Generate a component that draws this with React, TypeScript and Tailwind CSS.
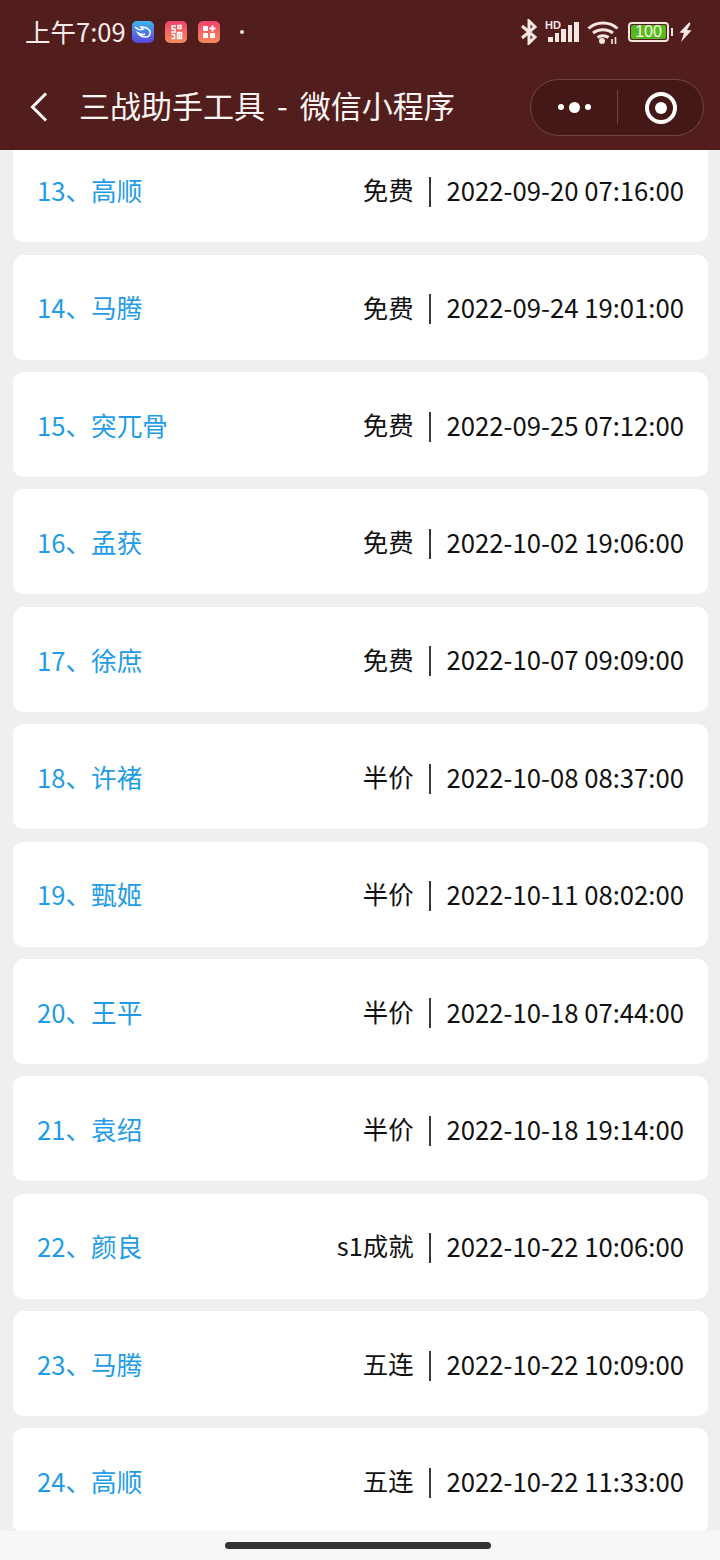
const rows = [
  { id: 13, name: '高顺', kind: '免费', time: '2022-09-20 07:16:00' },
  { id: 14, name: '马腾', kind: '免费', time: '2022-09-24 19:01:00' },
  { id: 15, name: '突兀骨', kind: '免费', time: '2022-09-25 07:12:00' },
  { id: 16, name: '孟获', kind: '免费', time: '2022-10-02 19:06:00' },
  { id: 17, name: '徐庶', kind: '免费', time: '2022-10-07 09:09:00' },
  { id: 18, name: '许褚', kind: '半价', time: '2022-10-08 08:37:00' },
  { id: 19, name: '甄姬', kind: '半价', time: '2022-10-11 08:02:00' },
  { id: 20, name: '王平', kind: '半价', time: '2022-10-18 07:44:00' },
  { id: 21, name: '袁绍', kind: '半价', time: '2022-10-18 19:14:00' },
  { id: 22, name: '颜良', kind: 's1成就', time: '2022-10-22 10:06:00' },
  { id: 23, name: '马腾', kind: '五连', time: '2022-10-22 10:09:00' },
  { id: 24, name: '高顺', kind: '五连', time: '2022-10-22 11:33:00' },
]

function AppIcons() {
  return (
    <div className="flex items-center gap-[11px]">
      <svg width="22" height="22" viewBox="0 0 22 22">
        <defs>
          <linearGradient id="cloud" x1="0" y1="0" x2="0" y2="1">
            <stop offset="0" stopColor="#3fb4ee" />
            <stop offset="1" stopColor="#5a45d8" />
          </linearGradient>
        </defs>
        <rect width="22" height="22" rx="5" fill="url(#cloud)" />
        <path d="M3 6c3 3 6 3 8 2l-2-2c4 0 7 1 9 4 1 3-1 6-4 6-3 0-6-1-8-4 2 1 5 2 7 1" fill="none" stroke="#fff" strokeWidth="1.500" />
      </svg>
      <svg width="22" height="22" viewBox="0 0 22 22">
        <defs>
          <linearGradient id="red" x1="0" y1="0" x2="0" y2="1">
            <stop offset="0" stopColor="#f2456a" />
            <stop offset="1" stopColor="#f58a5c" />
          </linearGradient>
        </defs>
        <rect width="22" height="22" rx="5" fill="url(#red)" />
        <path d="M11 5H7v3h3v3H6M13 4.500h3v3h-3zM6.500 13.500h3v4h-3M12.500 11.500h4v6h-4zM14.500 11.500v6" fill="none" stroke="#fff" strokeWidth="1.500" />
      </svg>
      <svg width="22" height="22" viewBox="0 0 22 22">
        <rect width="22" height="22" rx="5" fill="url(#red)" />
        <rect x="5" y="5" width="5" height="5" rx="1" fill="#fff" />
        <rect x="12" y="12" width="5" height="5" rx="1" fill="#fff" />
        <rect x="5" y="12" width="5" height="5" rx="1" fill="#fff" />
        <path d="M14.500 4.500v6M11.500 7.500h6" stroke="#fff" strokeWidth="1.800" />
      </svg>
      <span className="ml-[9px] h-[4px] w-[4px] rounded-full bg-[#f3e6e3]" />
    </div>
  )
}

function StatusIcons() {
  return (
    <div className="flex items-center text-[#f5e6e3]">
      <svg width="18" height="26" viewBox="0 0 18 26" fill="none" stroke="currentColor" strokeWidth="3">
        <path d="M2 7l13 11-6 6V2l6 6L2 19" />
      </svg>
      <div className="relative ml-[8px] h-[22px] w-[33px]">
        <span className="absolute left-[-1px] top-[-1px] text-[11px] font-bold leading-[10px] [font-family:'Liberation_Sans',sans-serif]">HD</span>
        <div className="absolute bottom-[1px] left-[2px] flex items-end gap-[2px]">
          <span className="h-[5px] w-[4.600px] bg-current" />
          <span className="h-[9px] w-[4.600px] bg-current" />
          <span className="h-[13px] w-[4.600px] bg-current" />
          <span className="h-[17px] w-[4.600px] bg-current" />
          <span className="h-[20px] w-[4.600px] bg-current" />
        </div>
      </div>
      <svg className="ml-[8px]" width="32" height="24" viewBox="0 0 32 24" fill="none" stroke="currentColor" strokeWidth="3">
        <path d="M1.500 8.500C9 1 23 1 30.500 8.500" />
        <path d="M6 13c5.500-4.500 14.500-4.500 20 0" />
        <path d="M10.500 17.500c3-2.500 8-2.500 11 0" />
        <circle cx="15" cy="21" r="1.500" fill="currentColor" />
        <path d="M25 19v5M28.500 17v7" strokeWidth="1.600" />
      </svg>
      <div className="ml-[9px] flex h-[20px] w-[41px] items-center justify-center rounded-[4px] border-2 border-current p-[1px]">
        <span className="flex h-full w-full items-center justify-center rounded-[2px] bg-[#58b81c] text-[16px] leading-none text-[#f4f9ea] [font-family:'Liberation_Sans',sans-serif]">100</span>
      </div>
      <span className="ml-[2px] h-[8px] w-[2px] bg-current" />
      <svg className="ml-[6px]" width="13" height="20" viewBox="0 0 13 20" fill="currentColor">
        <path d="M10.500 0L.500 10.500l4.500.5L2 20 12.500 8.500 8 8l3.500-6z" />
      </svg>
    </div>
  )
}

export default function App() {
  return (
    <div className="flex h-[1560px] w-[720px] flex-col overflow-hidden bg-[#efefef] [font-family:'Noto_Sans_CJK_SC',sans-serif]">
      <header className="relative z-10 flex h-[150px] shrink-0 flex-col bg-[#521e1d] text-white">
        <div className="flex h-[64px] items-center justify-between pl-[25px] pr-[28px]">
          <div className="flex items-center gap-[6px]">
            <span className="mt-[-2px] text-[25.500px] leading-none text-[#f8ece9]">上午7:09</span>
            <AppIcons />
          </div>
          <StatusIcons />
        </div>
        <div className="flex h-[86px] items-center pl-[30px] pr-[16px]">
          <svg width="18" height="30" viewBox="0 0 18 30" fill="none" stroke="currentColor" strokeWidth="3">
            <path d="M16 1.500L2.500 15 16 28.500" />
          </svg>
          <h1 className="mb-[5px] ml-[31px] flex-1 text-[31px] font-normal leading-none text-[#fdf6f4] [word-spacing:5px]">三战助手工具 - 微信小程序</h1>
          <div className="flex h-[57px] w-[174px] items-center rounded-full border border-[#6f4644] bg-[#441817]">
            <div className="flex w-[86px] items-center justify-center gap-[5px]">
              <span className="h-[6px] w-[6px] rounded-full bg-white" />
              <span className="h-[11px] w-[11px] rounded-full bg-white" />
              <span className="h-[6px] w-[6px] rounded-full bg-white" />
            </div>
            <span className="h-[34px] w-px bg-[#6f4644]" />
            <div className="flex flex-1 items-center justify-center pl-[1px] pt-[1px]">
              <div className="flex h-[32px] w-[32px] items-center justify-center rounded-full border-[4px] border-white">
                <span className="h-[12px] w-[12px] rounded-full bg-white" />
              </div>
            </div>
          </div>
        </div>
      </header>

      <main className="min-h-0 flex-1 overflow-hidden">
        <ul className="mt-[-12.6px] flex flex-col gap-[12.36px] pl-[13px] pr-[12px]">
          {rows.map((row) => (
            <li key={row.id} className="flex h-[105px] shrink-0 items-center justify-between rounded-[10px] bg-white px-[24px]">
              <span className="text-[25.6px] leading-none text-[#1f9ce4]">{row.id}、{row.name}</span>
              <div className="flex items-center text-[25.7px] leading-none text-[#111111]">
                <span className="text-[25.4px]">{row.kind}</span>
                <span className="ml-[15px] mr-[16px] mt-[4px] h-[30px] w-[2px] bg-[#3a3a3a]" />
                <span>{row.time}</span>
              </div>
            </li>
          ))}
        </ul>
      </main>

      <footer className="flex h-[29px] shrink-0 items-start justify-center bg-[#f7f7f7] pt-[11px]">
        <div className="ml-[-4px] h-[7px] w-[266px] rounded-full bg-[#333333]" />
      </footer>
    </div>
  )
}
